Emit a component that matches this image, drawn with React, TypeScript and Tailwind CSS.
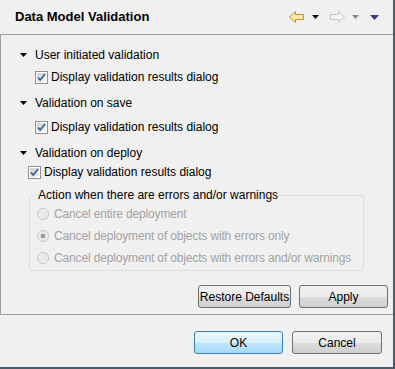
import type { ReactNode } from "react";

const font = { fontFamily: '"Liberation Sans", Arial, sans-serif' };

function Caret({ className = "" }: { className?: string }) {
	return (
		<svg width="7" height="4" viewBox="0 0 7 4" className={className}>
			<path d="M0 0h7L3.5 4z" fill="currentColor" />
		</svg>
	);
}

function Arrow({ back }: { back?: boolean }) {
	return (
		<svg width="16" height="12" viewBox="0 0 16 12" className={back ? "" : "-scale-x-100"}>
			<path
				d="M0.5 6L6.5 0.5V3.5H14.5V8.5H6.5V11.5Z"
				fill={back ? "#fde8a4" : "#f6f6f6"}
				stroke={back ? "#d38e1e" : "#c4c4c4"}
				strokeLinejoin="round"
			/>
		</svg>
	);
}

function Checkbox() {
	return (
		<svg width="13" height="13" viewBox="0 0 13 13" className="shrink-0">
			<defs>
				<linearGradient id="cb" x1="0" y1="0" x2="1" y2="1">
					<stop offset="0" stopColor="#cbcfd5" />
					<stop offset="1" stopColor="#f6f6f6" />
				</linearGradient>
			</defs>
			<rect x="0.5" y="0.5" width="12" height="12" fill="#fff" stroke="#8f8f8f" />
			<rect x="2" y="2" width="9" height="9" fill="url(#cb)" />
			<path d="M3 6.5L5.2 9L10 3" fill="none" stroke="#3a5895" strokeWidth="1.7" />
		</svg>
	);
}

function Radio({ checked }: { checked?: boolean }) {
	return (
		<svg width="12" height="12" viewBox="0 0 12 12" className="shrink-0">
			<circle cx="6" cy="6" r="5.5" fill="#f2f2f2" stroke="#c2c2c2" />
			<circle cx="6" cy="6" r="4" fill="#e8e8e8" />
			{checked && <circle cx="6" cy="6" r="2.3" fill="#9a9a9a" />}
		</svg>
	);
}

function Section({ label }: { label: string }) {
	return (
		<div className="flex h-4 items-center">
			<Caret className="ml-[19px] text-black" />
			<span className="ml-[8px] text-[12px] leading-4">{label}</span>
		</div>
	);
}

function CheckRow({ indent }: { indent: string }) {
	return (
		<div className={`flex h-4 items-center ${indent}`}>
			<Checkbox />
			<span className="ml-[3px] text-[12px] leading-4">Display validation results dialog</span>
		</div>
	);
}

function Button({ children, primary, width }: { children: ReactNode; primary?: boolean; width: string }) {
	return (
		<button
			className={`${width} h-[23px] rounded-[3px] border text-[12px] text-black ${
				primary
					? "border-[#3c7fb1] bg-[linear-gradient(#eaf6fd_0%,#d9f0fc_50%,#bee6fd_51%,#a7d9f5_100%)]"
					: "border-[#707070] bg-[linear-gradient(#f2f2f2_0%,#ebebeb_50%,#dddddd_51%,#cfcfcf_100%)]"
			}`}
		>
			{children}
		</button>
	);
}

export default function App() {
	return (
		<div
			style={font}
			className="flex h-[369px] w-[395px] flex-col border-r-2 border-b-2 border-[#4d5b69] bg-[#f0f0f0] text-black"
		>
			<header className="flex h-[34px] items-center pl-[15px] pr-[14px]">
				<h1 className="text-[13px] font-bold">Data Model Validation</h1>
				<div className="ml-auto flex items-center">
					<Arrow back />
					<Caret className="ml-[7px] text-[#111]" />
					<span className="ml-[10px]">
						<Arrow />
					</span>
					<Caret className="ml-[7px] text-[#888]" />
					<svg width="9" height="5" viewBox="0 0 9 5" className="ml-[11px]">
						<path d="M0 0h9L4.5 5z" fill="#4a2d85" />
					</svg>
				</div>
			</header>

			<main className="flex h-[281px] flex-col border-y border-l border-[#a0a0a0] pt-[12px]">
				<Section label="User initiated validation" />
				<div className="mt-[6px]">
					<CheckRow indent="ml-[34px]" />
				</div>
				<div className="mt-[10px]">
					<Section label="Validation on save" />
				</div>
				<div className="mt-[8px]">
					<CheckRow indent="ml-[34px]" />
				</div>
				<div className="mt-[10px]">
					<Section label="Validation on deploy" />
				</div>
				<div className="mt-[3px]">
					<CheckRow indent="ml-[27px]" />
				</div>

				<fieldset className="ml-[28px] mt-[7px] w-[335px] rounded-[3px] border border-[#d5dfe5] px-[7px] pb-[4px]">
					<legend className="whitespace-nowrap px-[1px] text-[12px] leading-4">
						Action when there are errors and/or warnings
					</legend>
					<div className="mt-[3px] flex flex-col gap-[6px] whitespace-nowrap text-[12px] leading-4 tracking-[-0.15px] text-[#a3a3a3]">
						<label className="flex h-4 items-center gap-[5px]">
							<Radio />
							Cancel entire deployment
						</label>
						<label className="flex h-4 items-center gap-[5px]">
							<Radio checked />
							Cancel deployment of objects with errors only
						</label>
						<label className="flex h-4 items-center gap-[5px]">
							<Radio />
							Cancel deployment of objects with errors and/or warnings
						</label>
					</div>
				</fieldset>

				<div className="mt-[14px] flex justify-end gap-[8px] pr-[5px]">
					<Button width="w-[93px]">Restore Defaults</Button>
					<Button width="w-[89px]">Apply</Button>
				</div>
			</main>

			<footer className="flex justify-end gap-[9px] pr-[11px] pt-[16px]">
				<Button primary width="w-[89px]">
					OK
				</Button>
				<Button width="w-[90px]">Cancel</Button>
			</footer>
		</div>
	);
}
